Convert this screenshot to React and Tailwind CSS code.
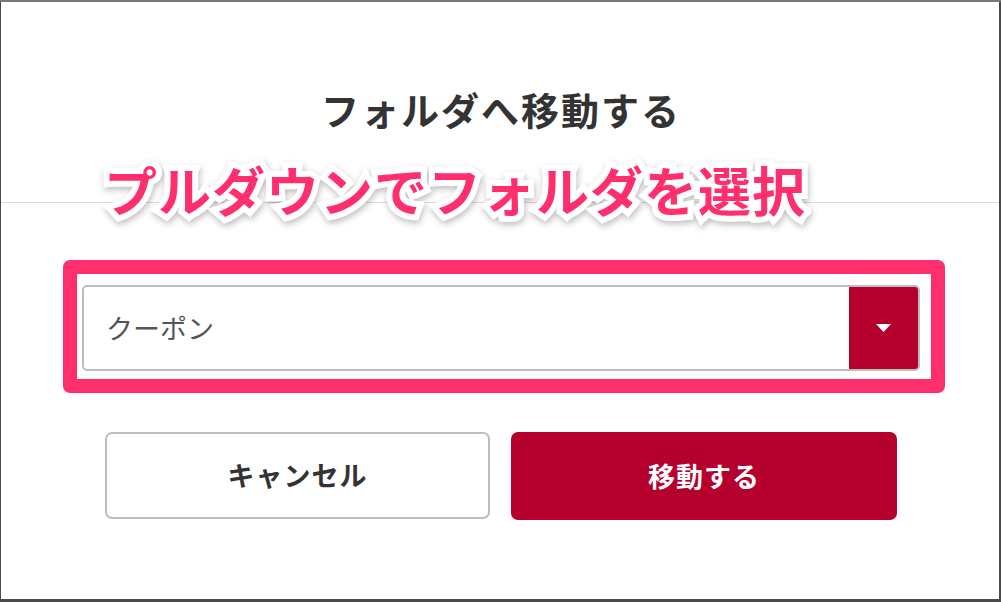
import React from 'react';

const jp = "font-['Noto_Sans_CJK_JP','Noto_Sans',sans-serif]";

const Annotation = ({ text }) => (
  <div className="absolute left-[104px] top-[163px]">
    {/* white outline + soft shadow behind */}
    <span
      aria-hidden="true"
      className="absolute inset-0 text-[53px] leading-none font-bold tracking-[1px] text-white [-webkit-text-stroke:12px_white] [filter:drop-shadow(1px_3px_3px_rgba(0,0,0,0.25))] whitespace-nowrap"
    >
      {text}
    </span>
    <span className="relative text-[53px] leading-none font-bold tracking-[1px] text-[#ff2e6c] whitespace-nowrap">
      {text}
    </span>
  </div>
);

const App = () => {
  return (
    <div className={`relative w-[1001px] h-[602px] bg-[#4a4a4a] overflow-hidden ${jp}`}>
      <div className="h-[2px] bg-[#777]" />
      <div className="ml-[1px] w-[998px] h-[597px] bg-white flex flex-col">
        {/* Header */}
        <div className="h-[201px] pt-[14px] border-b border-[#dddddd] flex items-center justify-center">
          <h1 className="pl-[2px] text-[38px] font-bold tracking-[2px] text-[#333] leading-none">
            フォルダへ移動する
          </h1>
        </div>

        {/* Select */}
        <div className="mt-[82px] ml-[81px] w-[838px] h-[86px] flex rounded-[5px] border-2 border-[#bdbdbd] overflow-hidden">
          <div className="flex-1 flex items-center pl-[22px] text-[27px] text-[#555]">クーポン</div>
          <div className="w-[69px] bg-[#b5002e] flex items-center justify-center">
            <svg width="15" height="8" viewBox="0 0 15 8">
              <path d="M0 0 L15 0 L7.5 8 Z" fill="#fff" />
            </svg>
          </div>
        </div>

        {/* Buttons */}
        <div className="mt-[61px] ml-[104px] flex gap-[21px]">
          <button className="w-[385px] h-[87px] rounded-[7px] border-2 border-[#bdbdbd] bg-white text-[27px] font-bold tracking-[1px] text-[#333]">
            キャンセル
          </button>
          <button className="w-[386px] h-[88px] rounded-[7px] bg-[#b5002e] text-[27px] font-bold tracking-[1px] text-white">
            移動する
          </button>
        </div>
      </div>

      {/* Annotation overlay */}
      <div className="absolute left-[63px] top-[260px] w-[882px] h-[133px] rounded-[7px] border-[14px] border-[#ff2e6c]" />
      <Annotation text="プルダウンでフォルダを選択" />
    </div>
  );
};

export default App;
